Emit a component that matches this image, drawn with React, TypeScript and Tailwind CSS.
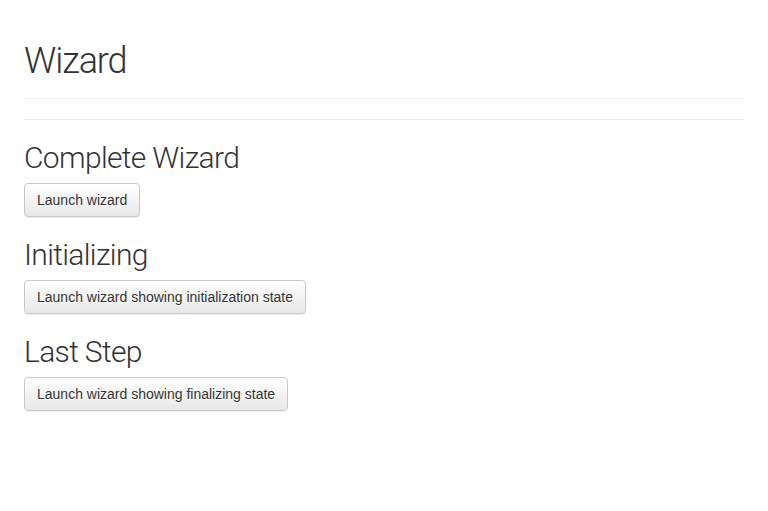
export default function App() {
  const sections = [
    { title: "Complete Wizard", label: "Launch wizard" },
    { title: "Initializing", label: "Launch wizard showing initialization state" },
    { title: "Last Step", label: "Launch wizard showing finalizing state" },
  ];

  return (
    <div className="min-h-screen bg-white px-6 pt-10 text-[#333] [font-family:'Liberation_Sans',Arial,sans-serif]">
      <div className="border-b border-[#eee] pb-[9px]">
        <h1 className="mb-[10px] pt-[3px] text-[36px] leading-[36px] font-light tracking-[-0.03em] [font-family:Roboto,'Liberation_Sans',sans-serif]">
          Wizard
        </h1>
      </div>
      <hr className="mt-5 border-t border-[#eee]" />

      {sections.map((s) => (
        <section key={s.title} className="mt-5">
          <h2 className="mb-[10px] pt-[3px] text-[30px] leading-[30px] font-light tracking-[-0.022em] [font-family:Roboto,'Liberation_Sans',sans-serif]">
            {s.title}
          </h2>
          <button
            type="button"
            className="rounded border border-[#c8c8c8] bg-gradient-to-b from-white to-[#e8e8e8] px-3 py-1.5 text-sm leading-5 text-[#333] shadow-[inset_0_1px_0_rgba(255,255,255,0.15),0_1px_1px_rgba(0,0,0,0.075)] [text-shadow:0_1px_0_#fff]"
          >
            {s.label}
          </button>
        </section>
      ))}
    </div>
  );
}
